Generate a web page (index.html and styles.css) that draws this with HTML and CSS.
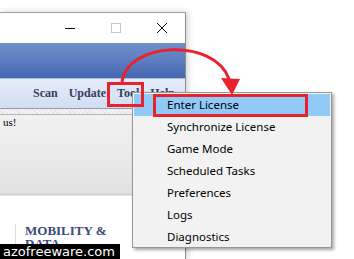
FILE: index.html
```html
<!DOCTYPE html>
<html lang="en">
<head>
<meta charset="UTF-8">
<meta name="viewport" content="width=device-width, initial-scale=1.0">
<link rel="stylesheet" href="styles.css">
<title>Tool menu</title>
</head>
<body>
  <div class="window">
    <div class="titlebar">
      <span class="ctl">
        <svg width="12" height="12" viewBox="0 0 12 12"><path d="M1 6.5h10" stroke="#000" stroke-width="1"/></svg>
      </span>
      <span class="ctl">
        <svg width="12" height="12" viewBox="0 0 12 12"><rect x="1.5" y="1.5" width="9" height="9" fill="none" stroke="#c8c8c8" stroke-width="1"/></svg>
      </span>
      <span class="ctl">
        <svg width="12" height="12" viewBox="0 0 12 12"><path d="M1 1l10 10M11 1L1 11" stroke="#000" stroke-width="1"/></svg>
      </span>
    </div>
    <div class="banner"></div>
    <div class="menubar">
      <span class="menu-item">Scan</span>
      <span class="menu-item">Update</span>
      <span class="menu-item">Tool</span>
      <span class="menu-item">Help</span>
    </div>
    <div class="strip"></div>
    <div class="content">
      <div class="notice">us!</div>
      <div class="article">
        <h3>MOBILITY &amp;<br>DATA</h3>
      </div>
    </div>
  </div>

  <div class="popup">
    <div class="popup-item active">Enter License</div>
    <div class="popup-item">Synchronize License</div>
    <div class="popup-item">Game Mode</div>
    <div class="popup-item">Scheduled Tasks</div>
    <div class="popup-item">Preferences</div>
    <div class="popup-item">Logs</div>
    <div class="popup-item">Diagnostics</div>
  </div>

  <div class="mark mark-tool"></div>
  <div class="mark mark-enter"></div>

  <svg class="arrow" width="354" height="259" viewBox="0 0 354 259">
    <path d="M122 82 C127 42, 214 37, 229 79" fill="none" stroke="#e8232b" stroke-width="3"/>
    <polygon points="221,78 240,79 232,95" fill="#e8232b"/>
  </svg>

  <div class="watermark">azofreeware.com</div>
</body>
</html>
```

FILE: styles.css
```css
body {
  margin: 0;
  width: 354px;
  height: 259px;
  overflow: hidden;
  position: relative;
  background-color: #fff;
  font-family: "Noto Sans", Arial, sans-serif;
}

.window {
  box-sizing: border-box;
  margin-top: 12px;
  width: 186px;
  height: 247px;
  border-top: 1px solid #a3a3a3;
  border-right: 1px solid #8c8c8c;
  box-shadow: 2px 0 6px rgba(0, 0, 0, 0.18);
  display: flex;
  flex-direction: column;
  overflow: hidden;
  background-color: #fff;
}

.titlebar {
  height: 30px;
  flex: none;
  display: flex;
  justify-content: flex-end;
  background-color: #fff;
}

.ctl {
  width: 46px;
  display: flex;
  align-items: center;
  justify-content: center;
}

.banner {
  height: 35px;
  flex: none;
  background: linear-gradient(#7190ca, #5a7bbf 55%, #4767b1);
}

.menubar {
  height: 30px;
  flex: none;
  box-sizing: border-box;
  border-top: 1px solid #a9bbe0;
  background: linear-gradient(#e6edf9, #d2ddf2);
  display: flex;
  align-items: center;
  padding-left: 33px;
  gap: 11px;
  font-family: "Liberation Serif", "Times New Roman", serif;
  font-weight: bold;
  font-size: 12px;
  color: #33415e;
  white-space: nowrap;
}

.strip {
  height: 5px;
  flex: none;
  border-top: 1px solid #8e9ab0;
  border-bottom: 1px solid #b5b5b5;
  background: repeating-linear-gradient(45deg, #f4f4f4 0 2px, #e4e4e4 2px 3px);
}

.content {
  flex: 1;
  background: linear-gradient(#f1f1f1, #e2e2e2 78px, #c9c9c9 80px, #fff 81px);
}

.notice {
  height: 80px;
  padding: 1px 0 0 3px;
  box-sizing: border-box;
  font-family: "Liberation Serif", serif;
  font-size: 11px;
  color: #000;
}

.article {
  margin: 29px 0 0 15px;
  padding-left: 9px;
  border-left: 1px solid #dcdcdc;
  height: 60px;
}

.article h3 {
  margin: 0;
  font-family: "Liberation Serif", "Times New Roman", serif;
  font-size: 13px;
  line-height: 13px;
  color: #3a4a7a;
}

.popup {
  position: absolute;
  left: 132px;
  top: 92px;
  width: 200px;
  height: 156px;
  box-sizing: border-box;
  border: 1px solid #979797;
  background-color: #f2f2f2;
  box-shadow: 2px 2px 3px rgba(0, 0, 0, 0.35);
  padding: 0 1px;
}

.popup-item {
  height: 22px;
  line-height: 22px;
  padding-left: 33px;
  font-size: 11.5px;
  color: #000;
  white-space: nowrap;
}

.popup-item.active {
  background-color: #91c9f7;
  margin-top: 1px;
}

.mark {
  position: absolute;
  border: 3px solid #e8232b;
  box-sizing: border-box;
}

.mark-tool {
  left: 107px;
  top: 82px;
  width: 37px;
  height: 25px;
}

.mark-enter {
  left: 153px;
  top: 94px;
  width: 155px;
  height: 23px;
}

.arrow {
  position: absolute;
  left: 0;
  top: 0;
  pointer-events: none;
}

.watermark {
  position: absolute;
  left: 0;
  bottom: 0;
  width: 117px;
  height: 15px;
  padding-left: 3px;
  background-color: #000;
  color: #fff;
  font-family: "DejaVu Sans", sans-serif;
  font-size: 13px;
  line-height: 15px;
  white-space: nowrap;
}
```
